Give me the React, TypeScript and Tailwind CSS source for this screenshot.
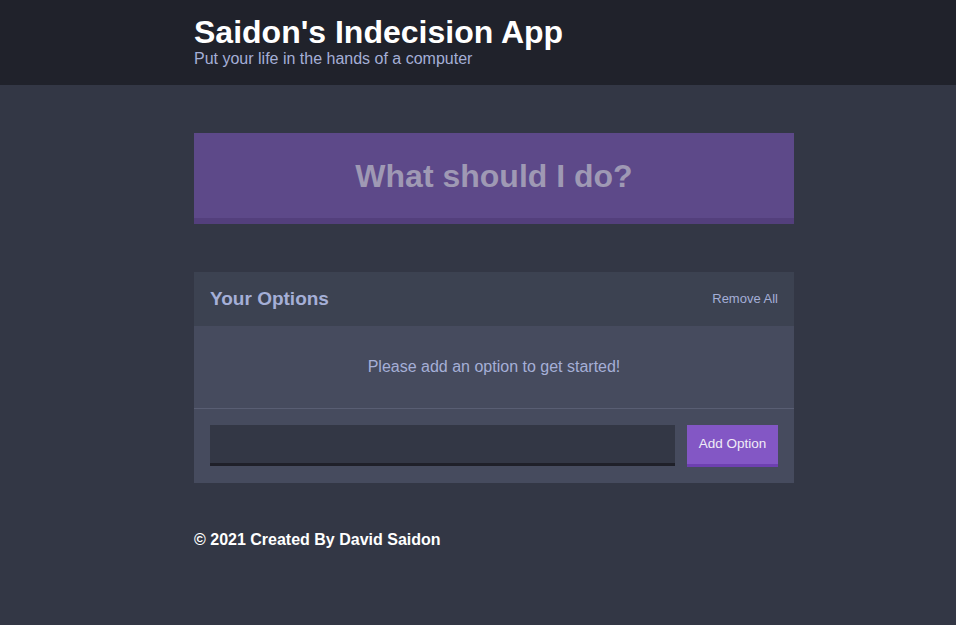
import React from 'react';

export default function App() {
  return (
    <div
      className="min-h-[625px] bg-[#333745] text-white"
      style={{ fontFamily: '"Liberation Sans", Arial, sans-serif' }}
    >
      <header className="bg-[#20222b] h-[85px]">
        <div className="flex justify-center pl-[32px]">
          <div className="w-[600px] pt-[14px]">
            <h1 className="text-[32px] font-bold leading-[36px] text-white">Saidon's Indecision App</h1>
            <h2 className="text-[16px] leading-[18px] text-[#a5afd7]">Put your life in the hands of a computer</h2>
          </div>
        </div>
      </header>

      <main className="flex justify-center pl-[32px]">
        <div className="w-[600px]">
          <button
            disabled
            className="mt-[48px] w-full h-[91px] bg-[#5d4989] border-b-[6px] border-[#533f7c] text-[#9f99b4] text-[32px] font-bold"
          >
            What should I do?
          </button>

          <div className="mt-[48px] bg-[#464b5e]">
            <div className="flex items-center justify-between h-[54px] bg-[#3c4251] px-4">
              <h3 className="text-[19px] font-bold text-[#a5afd7]">Your Options</h3>
              <button className="text-[13px] text-[#a5afd7]">Remove All</button>
            </div>
            <div className="h-[83px] flex items-center justify-center border-b border-[#595e73]">
              <p className="text-[16px] text-[#a5afd7]">Please add an option to get started!</p>
            </div>
            <form className="flex gap-3 px-4 pt-4 pb-4" onSubmit={(e) => e.preventDefault()}>
              <input
                type="text"
                className="flex-1 h-[41px] bg-[#333745] border-b-[3px] border-[#1f2029] outline-none px-3 text-white"
              />
              <button className="w-[91px] h-[42px] bg-[#8357c5] border-b-[3px] border-[#6d40b0] text-[13.5px] text-[#f0ecf7]">
                Add Option
              </button>
            </form>
          </div>

          <footer className="mt-[48px]">
            <p className="text-[16px] font-bold leading-[18px] text-white">© 2021 Created By David Saidon</p>
          </footer>
        </div>
      </main>
    </div>
  );
}
